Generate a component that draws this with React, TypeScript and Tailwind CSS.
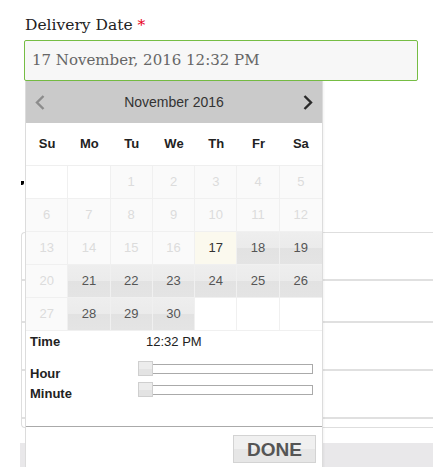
const sans = "font-['Liberation_Sans',Arial,sans-serif]";

type Day = { n?: number; kind: "empty" | "off" | "today" | "on" };

const weeks: Day[][] = [
  [{ kind: "empty" }, { kind: "empty" }, ...[1, 2, 3, 4, 5].map((n) => ({ n, kind: "off" as const }))],
  [6, 7, 8, 9, 10, 11, 12].map((n) => ({ n, kind: "off" as const })),
  [
    ...[13, 14, 15, 16].map((n) => ({ n, kind: "off" as const })),
    { n: 17, kind: "today" },
    { n: 18, kind: "on" },
    { n: 19, kind: "on" },
  ],
  [{ n: 20, kind: "off" }, ...[21, 22, 23, 24, 25, 26].map((n) => ({ n, kind: "on" as const }))],
  [
    { n: 27, kind: "off" },
    ...[28, 29, 30].map((n) => ({ n, kind: "on" as const })),
    { kind: "empty" },
    { kind: "empty" },
    { kind: "empty" },
  ],
];

const cellStyle: Record<Day["kind"], string> = {
  empty: "bg-white",
  off: "bg-[#fafafa] text-[#dcdcdc]",
  today: "bg-[#fbf9ee] text-[#333]",
  on: "bg-[linear-gradient(#eeeeee_0%,#ebebeb_50%,#e2e2e2_50%,#e4e4e4_100%)] text-[#555]",
};

function Chevron({ dir, color }: { dir: "left" | "right"; color: string }) {
  return (
    <svg width="10" height="15" viewBox="0 0 10 15" className="shrink-0">
      <path
        d={dir === "left" ? "M8.5 1 L2 7.5 L8.5 14" : "M1.5 1 L8 7.5 L1.5 14"}
        fill="none"
        stroke={color}
        strokeWidth="2.4"
      />
    </svg>
  );
}

function Slider() {
  return (
    <div className="relative w-[175px] h-[10px] mt-[3px] border border-[#aaa] bg-white">
      <div className="absolute left-[-1px] top-[-4px] w-[15px] h-[15px] border border-[#cfcfcf] bg-[linear-gradient(#ececec_50%,#e3e3e3_50%)]" />
    </div>
  );
}

export default function App() {
  return (
    <div className="relative w-[433px] h-[467px] overflow-hidden bg-white">
      <div className="pt-[15px] pl-[25px] leading-[20px] text-[15.5px] text-[#222] font-['DejaVu_Serif',serif]">
        Delivery Date <span className="text-[#e8001c]">*</span>
      </div>

      <div className="mt-[5px] ml-[24px] w-[394px] h-[41px] flex items-center pl-[7px] border border-[#76bd44] rounded-[2px] bg-[#f7f7f7] text-[15px] text-[#666] font-['DejaVu_Serif',serif]">
        17 November, 2016 12:32 PM
      </div>

      {/* content behind the picker */}
      <div className="mt-[100px] ml-[21px] w-[3px] h-[4px] bg-black rounded-br-[2px]" />
      <div className="mt-[47px] ml-[21px] border-l border-t border-b border-[#dedede] rounded-l-[4px]">
        <div className="h-[48px] border-b-2 border-[#e0e0e0]" />
        <div className="h-[42px] border-b-2 border-[#e0e0e0]" />
        <div className="h-[48px] border-b-2 border-[#e0e0e0]" />
        <div className="h-[48px] border-b-2 border-[#e0e0e0]" />
        <div className="h-[8px]" />
      </div>
      <div className="mt-[15px] ml-[20px] h-[30px] bg-[#e9e8ea]" />

      {/* date picker */}
      <div className={`absolute left-[25px] top-[81px] w-[298px] border-x border-[#dcdcdc] bg-white shadow-[1px_0_2px_rgba(0,0,0,0.05)] ${sans}`}>
        <div className="h-[42px] flex items-center justify-between px-[9px] bg-[#cacaca]">
          <Chevron dir="left" color="#8c8c8c" />
          <span className="text-[14px] text-[#333]">November 2016</span>
          <Chevron dir="right" color="#2a2a2a" />
        </div>

        <div className="grid grid-cols-7 h-[42px] items-center text-center text-[13px] font-bold text-[#222]">
          {["Su", "Mo", "Tu", "We", "Th", "Fr", "Sa"].map((d) => (
            <span key={d}>{d}</span>
          ))}
        </div>

        <div className="border-t border-[#efefef]">
          {weeks.map((week, i) => (
            <div key={i} className="grid grid-cols-7 h-[33px]">
              {week.map((d, j) => (
                <div
                  key={j}
                  className={`flex items-center justify-center text-[13px] border-r border-b border-[#f0f0f0] last:border-r-0 ${cellStyle[d.kind]}`}
                >
                  {d.n}
                </div>
              ))}
            </div>
          ))}
        </div>

        <div className="h-[96px] border-b border-[#aaa] text-[13px] text-[#222]">
          <div className="h-[22px] flex items-center pl-[4px]">
            <span className="w-[116px] font-bold">Time</span>
            <span>12:32 PM</span>
          </div>
          <div className="flex mt-[8px]">
            <span className="w-[112px] pl-[4px] pt-[5px] leading-[15px] font-bold">Hour</span>
            <Slider />
          </div>
          <div className="flex mt-[1px]">
            <span className="w-[112px] pl-[4px] pt-[4px] leading-[15px] font-bold">Minute</span>
            <Slider />
          </div>
        </div>

        <div className="flex justify-end pt-[8px] pr-[6px] pb-[20px]">
          <button className="w-[83px] h-[28px] border border-[#d3d3d3] bg-[linear-gradient(#f0f0f0_50%,#e6e6e6_50%)] text-[19px] font-bold leading-none text-[#555]">
            DONE
          </button>
        </div>
      </div>
    </div>
  );
}
